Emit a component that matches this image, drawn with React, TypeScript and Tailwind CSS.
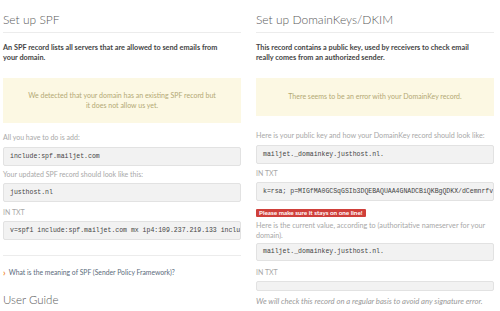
import React from "react";

const sans = { fontFamily: 'Lato, "Open Sans", sans-serif' };
const mono = { fontFamily: '"Liberation Mono", "DejaVu Sans Mono", monospace' };

function Field({ children, className = "", h = "h-[19px]" }: { children?: React.ReactNode; className?: string; h?: string }) {
  return (
    <div
      className={`${h} shrink-0 bg-[#f2f2f2] border border-[#e2e2e2] rounded-[2px] pl-[6px] flex items-center overflow-hidden whitespace-nowrap text-[6.5px] text-[#444] ${className}`}
      style={mono}
    >
      {children}
    </div>
  );
}

function Label({ children, className = "" }: { children: React.ReactNode; className?: string }) {
  return <div className={`leading-[10px] text-[#a8a8a8] whitespace-nowrap ${className}`}>{children}</div>;
}

function Header({ title, l1, l2 }: { title: string; l1: string; l2: string }) {
  return (
    <>
      <div className="mt-[12px] text-[12px] leading-[16px] text-[#5a5a5a] font-light">{title}</div>
      <div className="mt-[4px] border-t border-[#ececec]" />
      <div className="mt-[10px] text-[7.3px] leading-[10px] font-bold text-[#444] whitespace-nowrap">
        <div>{l1}</div>
        <div>{l2}</div>
      </div>
    </>
  );
}

export default function App() {
  return (
    <div className="w-[500px] h-[311px] overflow-hidden bg-white flex gap-[15px] pl-[3px]" style={sans}>
      <div className="w-[238px] flex flex-col">
        <Header
          title="Set up SPF"
          l1="An SPF record lists all servers that are allowed to send emails from"
          l2="your domain."
        />
        <div className="mt-[15px] h-[45px] bg-[#fcf8e3] flex flex-col items-center justify-center text-center text-[7px] leading-[9.5px] text-[#b3a874] whitespace-nowrap">
          <div>We detected that your domain has an existing SPF record but</div>
          <div>it does not allow us yet.</div>
        </div>
        <Label className="mt-[9px] text-[7px]">All you have to do is add:</Label>
        <Field className="mt-[5px]">include:spf.mailjet.com</Field>
        <Label className="mt-[3px] text-[7px]">Your updated SPF record should look like this:</Label>
        <Field className="mt-[4px]">justhost.nl</Field>
        <Label className="mt-[5px] text-[7px]">IN TXT</Label>
        <Field className="mt-[4px]">v=spf1 include:spf.mailjet.com mx ip4:109.237.219.133 include:_spf.justhost.nl ~all</Field>
        <div className="mt-[15px] border-t border-[#ececec]" />
        <div className="mt-[11px] flex items-center text-[6.8px] leading-[10px] text-[#5b6b7c] whitespace-nowrap">
          <span className="text-[#ef8a2f] mr-[3px] text-[9px] font-bold leading-none">›</span>
          What is the meaning of SPF (Sender Policy Framework)?
        </div>
        <div className="mt-[15px] text-[11.5px] leading-[16px] text-[#5a5a5a] font-light">User Guide</div>
      </div>

      <div className="w-[238px] flex flex-col">
        <Header
          title="Set up DomainKeys/DKIM"
          l1="This record contains a public key, used by receivers to check email"
          l2="really comes from an authorized sender."
        />
        <div className="mt-[15px] h-[38px] bg-[#fcf8e3] flex items-center justify-center text-[7px] leading-[9.5px] text-[#b3a874] whitespace-nowrap">
          There seems to be an error with your DomainKey record.
        </div>
        <Label className="mt-[15px] text-[7.2px]">Here is your public key and how your DomainKey record should look like:</Label>
        <Field className="mt-[4px]">mailjet._domainkey.justhost.nl.</Field>
        <Label className="mt-[4px] text-[7px]">IN TXT</Label>
        <Field className="mt-[4px]">k=rsa; p=MIGfMA0GCSqGSIb3DQEBAQUAA4GNADCBiQKBgQDKX/dCemnrfvXk2</Field>
        <div className="mt-[8px] self-start h-[8px] bg-[#cf3f3a] rounded-[1px] px-[3px] flex items-center text-[6.3px] font-bold text-white leading-[8px] whitespace-nowrap">
          Please make sure it stays on one line!
        </div>
        <div className="mt-[4px] text-[7.2px] leading-[9.5px] text-[#a8a8a8] whitespace-nowrap">
          <div>Here is the current value, according to (authoritative nameserver for your</div>
          <div>domain).</div>
        </div>
        <Field className="mt-[3px]" h="h-[18px]">mailjet._domainkey.justhost.nl.</Field>
        <Label className="mt-[6px] text-[7px]">IN TXT</Label>
        <Field className="mt-[4px]" h="h-[10px]" />
        <div className="mt-[5px] text-[7.7px] leading-[10px] italic text-[#999] whitespace-nowrap">
          We will check this record on a regular basis to avoid any signature error.
        </div>
      </div>
    </div>
  );
}
